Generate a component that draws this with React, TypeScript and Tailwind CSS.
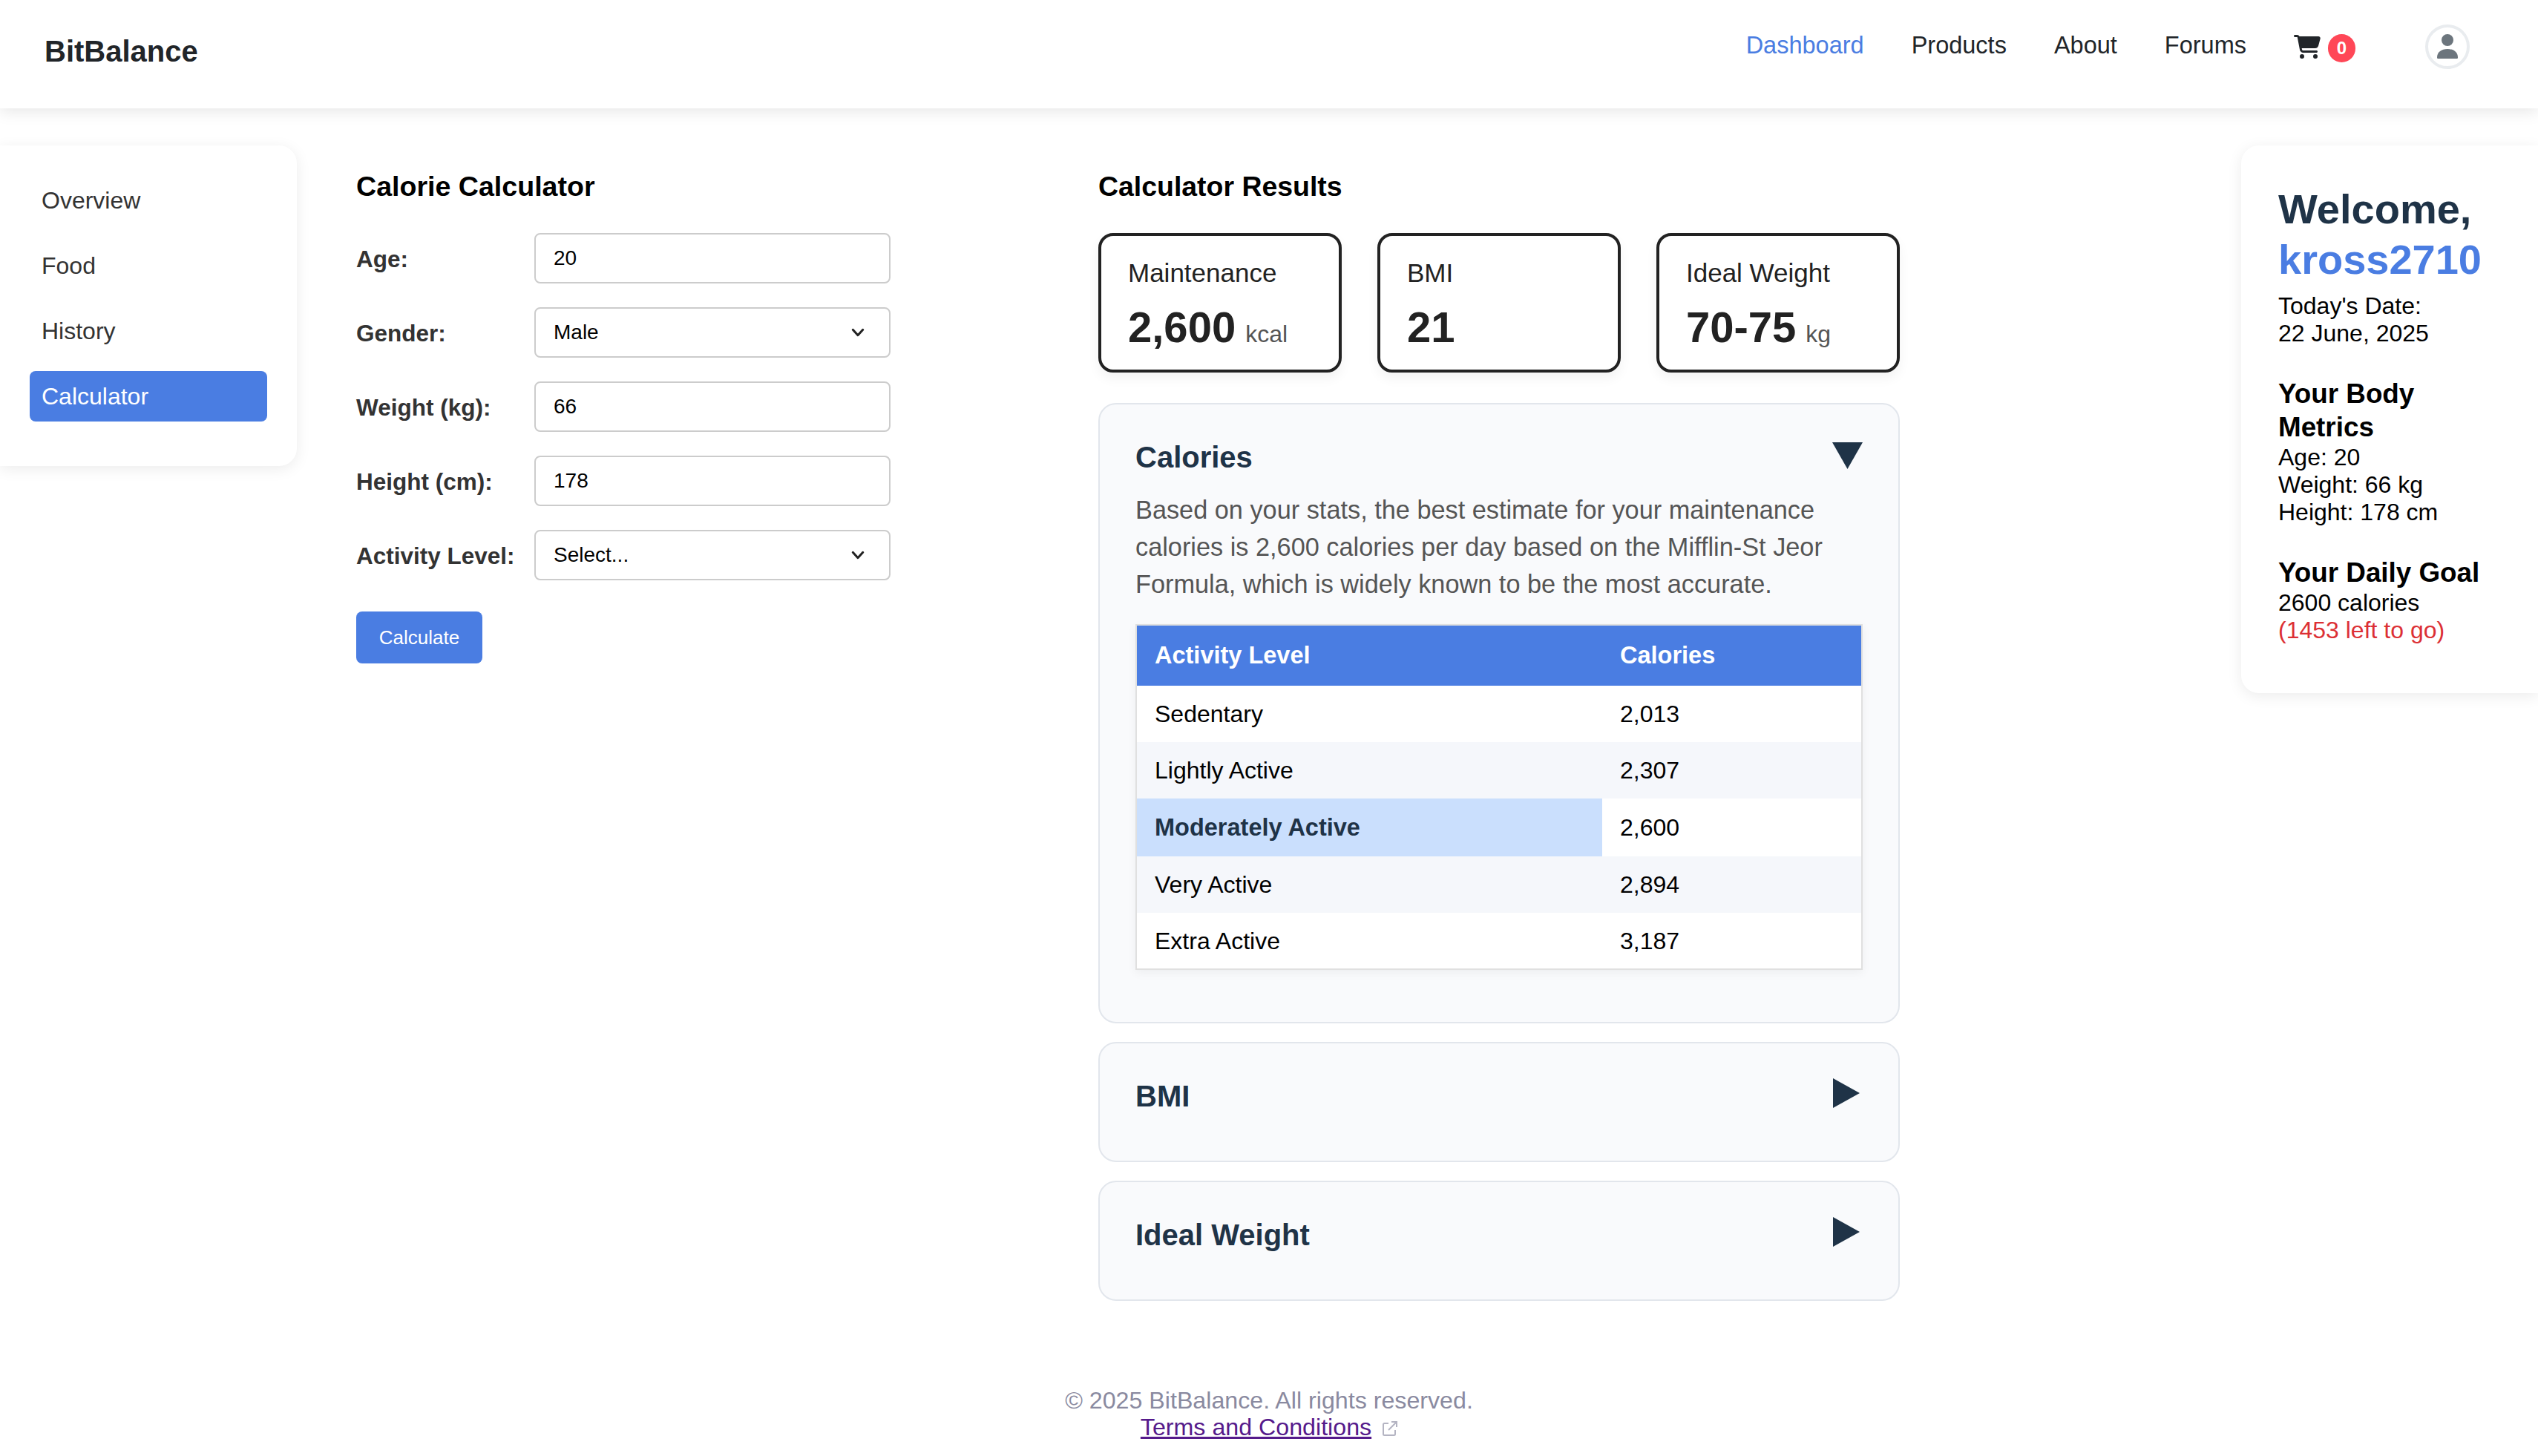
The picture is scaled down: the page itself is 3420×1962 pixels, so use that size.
import { FaCartShopping } from "react-icons/fa6";

const navLinks = ["Products", "About", "Forums"];
const sideLinks = ["Overview", "Food", "History"];

const rows = [
  { level: "Sedentary", cal: "2,013", bg: "bg-white", h: "h-[76px]" },
  { level: "Lightly Active", cal: "2,307", bg: "bg-[#f5f7fb]", h: "h-[76px]" },
  { level: "Very Active", cal: "2,894", bg: "bg-[#f5f7fb]", h: "h-[76px]" },
  { level: "Extra Active", cal: "3,187", bg: "bg-white", h: "h-[76px]" },
];

function Chevron() {
  return (
    <svg viewBox="0 0 16 16" className="pointer-events-none absolute right-[32px] top-[22px] h-[24px] w-[24px]" fill="none" stroke="#222" strokeWidth="2" strokeLinecap="round" strokeLinejoin="round">
      <path d="M3.5 5.500 8 10.500l4.500-5" />
    </svg>
  );
}

function Field({ label, children }: { label: string; children: React.ReactNode }) {
  return (
    <div className="flex h-[68px] items-center">
      <label className="mt-[4px] w-[240px] text-[31.5px] font-bold text-[#333]">{label}</label>
      <div className="relative">{children}</div>
    </div>
  );
}

const inputCls = "h-[68px] w-[480px] appearance-none rounded-[8px] border-2 border-[#ccc] bg-white px-[24px] text-[28px] text-black outline-none";

function StatCard({ label, value, unit }: { label: string; value: string; unit?: string }) {
  return (
    <div className="h-[188px] w-[328px] rounded-[20px] border-4 border-[#222] bg-white px-[36px] pt-[30px] shadow-[0_8px_16px_rgba(0,0,0,0.05)]">
      <div className="text-[35px] leading-[40px] text-[#222]">{label}</div>
      <div className="mt-[20px] flex items-baseline gap-[13px] text-[#222]">
        <span className="text-[58px] font-bold leading-[66px]">{value}</span>
        {unit && <span className="text-[32px] text-[#555]">{unit}</span>}
      </div>
    </div>
  );
}

function Accordion({ title, open, children }: { title: string; open?: boolean; children?: React.ReactNode }) {
  return (
    <div className="rounded-[24px] border-2 border-[#e2e6ec] bg-[#f9fafc] px-[48px] pt-[48px] pb-[48px]">
      <div className="relative flex h-[46px] items-center justify-between">
        <h4 className="text-[40px] font-bold leading-[46px] text-[#1f3347]">{title}</h4>
        {open ? (
          <svg viewBox="0 0 41 36" className="absolute right-[0px] top-[3px] h-[36px] w-[41px]" fill="#1f3347">
            <path d="M0 0h41L20.500 36z" />
          </svg>
        ) : (
          <svg viewBox="0 0 36 40" className="absolute right-[4px] top-[-1px] h-[40px] w-[36px]" fill="#1f3347">
            <path d="M0 0l36 20L0 40z" />
          </svg>
        )}
      </div>
      <div className="h-[16px]" />
      {children}
    </div>
  );
}

export default function App() {
  return (
    <div className="min-h-[1962px] bg-white font-['Liberation_Sans',Arial,sans-serif] text-black">
      <header className="flex h-[146px] items-center justify-between bg-white pl-[60px] pr-[92px] shadow-[0_4px_20px_rgba(0,0,0,0.1)]">
        <div className="-mt-[9px] text-[40px] font-bold text-[#212529]">BitBalance</div>
        <nav className="-mt-[20px] flex items-center">
          <a className="-mt-[4px] text-[32.5px] text-[#4a7de2]">Dashboard</a>
          {navLinks.map((l) => (
            <a key={l} className="-mt-[4px] ml-[64px] text-[32.5px] text-[#212529]">{l}</a>
          ))}
          <div className="ml-[64px] flex items-center">
            <FaCartShopping className="h-[32px] w-[36px] text-[#212529]" />
            <span className="ml-[10px] mt-[4px] flex h-[38px] w-[37px] items-center justify-center rounded-full bg-[#ff4757] text-[24px] font-bold text-white">0</span>
          </div>
          <div className="ml-[94px] flex h-[60px] w-[60px] items-center justify-center rounded-full border-4 border-[#e9ecef] bg-white">
            <svg viewBox="0 0 30 34" className="h-[34px] w-[30px]" fill="#6c757d">
              <circle cx="15" cy="8" r="8" />
              <path d="M1 31.500C1 24 7 20 15 20s14 4 14 11.500c0 1-.7 1.500-1.500 1.500h-25C1.700 33 1 32.500 1 31.500z" />
            </svg>
          </div>
        </nav>
      </header>

      <main className="flex items-start justify-between">
        <div className="flex items-start">
          <aside className="mt-[50px] flex h-[432px] w-[400px] flex-col gap-[20px] rounded-r-[24px] bg-white px-[40px] pt-[40px] shadow-[0_4px_20px_rgba(0,0,0,0.08)]">
            {sideLinks.map((l) => (
              <a key={l} className="flex h-[68px] items-center px-[16px] text-[32px] text-[#333]">{l}</a>
            ))}
            <a className="flex h-[68px] items-center rounded-[8px] bg-[#4a7de2] px-[16px] text-[32px] text-white">Calculator</a>
          </aside>

          <section className="ml-[80px] mt-[83px] w-[1000px]">
            <h3 className="text-[37.6px] font-bold leading-[45px]">Calorie Calculator</h3>
            <div className="mt-[40px] flex flex-col gap-[32px]">
              <Field label="Age:">
                <input className={inputCls} defaultValue="20" />
              </Field>
              <Field label="Gender:">
                <select className={inputCls} defaultValue="Male">
                  <option>Male</option>
                  <option>Female</option>
                </select>
                <Chevron />
              </Field>
              <Field label="Weight (kg):">
                <input className={inputCls} defaultValue="66" />
              </Field>
              <Field label="Height (cm):">
                <input className={inputCls} defaultValue="178" />
              </Field>
              <Field label="Activity Level:">
                <select className={inputCls} defaultValue="Select...">
                  <option>Select...</option>
                </select>
                <Chevron />
              </Field>
            </div>
            <button className="mt-[42px] h-[70px] w-[170px] rounded-[8px] bg-[#4a7de2] text-[26px] text-white">Calculate</button>
          </section>

          <section className="mt-[83px] w-[1080px]">
            <h3 className="text-[37.44px] font-bold leading-[45px]">Calculator Results</h3>
            <div className="mt-[40px] flex gap-[48px]">
              <StatCard label="Maintenance" value="2,600" unit="kcal" />
              <StatCard label="BMI" value="21" />
              <StatCard label="Ideal Weight" value="70-75" unit="kg" />
            </div>

            <div className="mt-[41px] flex flex-col gap-[25px]">
              <Accordion title="Calories" open>
                <p className="mt-[7px] text-[34.3px] leading-[50px] text-[#555]">
                  Based on your stats, the best estimate for your maintenance calories is 2,600 calories per day based on the Mifflin-St Jeor Formula, which is widely known to be the most accurate.
                </p>
                <table className="mt-[29px] mb-[22px] w-[980px] table-fixed border-2 border-[#e0e0e0] text-left text-[32px] shadow-[0_4px_12px_rgba(0,0,0,0.05)]">
                  <thead>
                    <tr className="h-[82px] bg-[#4a7de2] text-[32.5px] text-white">
                      <th className="w-[628px] pl-[24px] font-bold">Activity Level</th>
                      <th className="pl-[24px] font-bold">Calories</th>
                    </tr>
                  </thead>
                  <tbody>
                    {rows.slice(0, 2).map((r) => (
                      <tr key={r.level} className={`${r.bg} ${r.h}`}>
                        <td className="pl-[24px]">{r.level}</td>
                        <td className="pl-[24px]">{r.cal}</td>
                      </tr>
                    ))}
                    <tr className="h-[78px] bg-white">
                      <td className="bg-[#cadffd] pl-[24px] text-[32.5px] font-bold text-[#1f3347]">Moderately Active</td>
                      <td className="pl-[24px]">2,600</td>
                    </tr>
                    {rows.slice(2).map((r) => (
                      <tr key={r.level} className={`${r.bg} ${r.h}`}>
                        <td className="pl-[24px]">{r.level}</td>
                        <td className="pl-[24px]">{r.cal}</td>
                      </tr>
                    ))}
                  </tbody>
                </table>
              </Accordion>
              <Accordion title="BMI" />
              <Accordion title="Ideal Weight" />
            </div>
          </section>
        </div>

        <aside className="mt-[50px] h-[738px] w-[400px] rounded-l-[24px] bg-white pl-[50px] pr-[50px] pt-[52px] shadow-[0_4px_20px_rgba(0,0,0,0.08)]">
          <h2 className="text-[56px] font-bold leading-[68px] text-[#1f3347]">
            Welcome,
            <br />
            <span className="text-[#4a7de2]">kross2710</span>
          </h2>
          <p className="mt-[10px] text-[32px] leading-[37px]">
            Today's Date:
            <br />
            22 June, 2025
          </p>
          <h3 className="mt-[40px] text-[36.8px] font-bold leading-[45px]">Your Body Metrics</h3>
          <p className="text-[32px] leading-[37px]">
            Age: 20
            <br />
            Weight: 66 kg
            <br />
            Height: 178 cm
          </p>
          <h3 className="mt-[40px] text-[36.8px] font-bold leading-[45px]">Your Daily Goal</h3>
          <p className="text-[32px] leading-[37px]">
            2600 calories
            <br />
            <span className="text-[#dc3035]">(1453 left to go)</span>
          </p>
        </aside>
      </main>

      <footer className="mt-[116px] text-center text-[32.2px] leading-[36px] text-[#8a8aa0]">
        <div>© 2025 BitBalance. All rights reserved.</div>
        <div className="flex items-center justify-center">
          <a className="text-[#551a8b] underline">Terms and Conditions</a>
          <svg viewBox="0 0 20 20" className="ml-[15px] mt-[4px] h-[20px] w-[20px]" fill="none" stroke="#b4b4c2" strokeWidth="2">
            <path d="M8 3H2.500A1.500 1.500 0 0 0 1 4.500v13A1.500 1.500 0 0 0 2.500 19h13a1.500 1.500 0 0 0 1.500-1.500V12" />
            <path d="M8 12 19 1M12 1h7v7" />
          </svg>
        </div>
      </footer>
    </div>
  );
}
